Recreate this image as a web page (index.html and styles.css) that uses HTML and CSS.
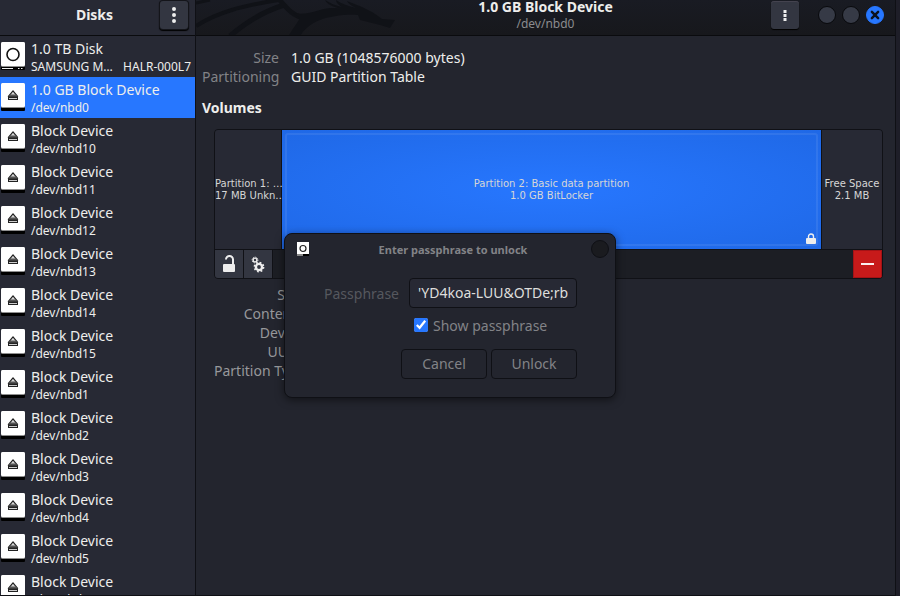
FILE: index.html
```html
<!DOCTYPE html>
<html lang="en">
<head>
<meta charset="utf-8">
<title>Disks</title>
<link rel="stylesheet" href="styles.css">
</head>
<body>
<svg class="defs" aria-hidden="true">
  <symbol id="drive" viewBox="0 0 24 29">
    <rect y="22" width="24" height="6" rx="1" fill="#000"/>
    <rect width="24" height="25" rx="1.5" fill="#8f8f8f"/>
    <rect width="24" height="24" rx="1.5" fill="#fff"/>
  </symbol>
  <symbol id="block" viewBox="0 0 24 29">
    <use href="#drive"/>
    <path d="M12 7.8 16.6 13.400H7.400Z" fill="#d8d8d8" stroke="#222" stroke-width="1.2" stroke-linejoin="round"/>
    <path d="M9 11.500h6l1.500 2H7.500Z" fill="#555"/>
    <rect x="7.500" y="14.500" width="9" height="2" fill="#ccc" stroke="#222"/>
  </symbol>
  <symbol id="disk" viewBox="0 0 24 29">
    <use href="#drive"/>
    <circle cx="12" cy="12.5" r="6" fill="none" stroke="#111" stroke-width="1.600"/>
    <path d="M1 26.500h11M17 26.500h1.500M20 26.500h1.500" stroke="#eee"/>
  </symbol>
</svg>
<div class="window">
  <aside class="sidebar">
    <header class="bar side-bar">
      <h1>Disks</h1>
      <button class="menu large" aria-label="Main menu"><svg viewBox="0 0 28 28"><path d="M14 8v0M14 14v0M14 20v0" stroke="#eee" stroke-width="4" stroke-linecap="round"/></svg></button>
    </header>
    <ul class="devices">
      <li><svg class="icon"><use href="#disk"/></svg><div><b>1.0 TB Disk</b><small><span>SAMSUNG M…</span><span>HALR-000L7</span></small></div></li>
      <li class="selected"><svg class="icon"><use href="#block"/></svg><div><b>1.0 GB Block Device</b><small>/dev/nbd0</small></div></li>
      <li><svg class="icon"><use href="#block"/></svg><div><b>Block Device</b><small>/dev/nbd10</small></div></li>
      <li><svg class="icon"><use href="#block"/></svg><div><b>Block Device</b><small>/dev/nbd11</small></div></li>
      <li><svg class="icon"><use href="#block"/></svg><div><b>Block Device</b><small>/dev/nbd12</small></div></li>
      <li><svg class="icon"><use href="#block"/></svg><div><b>Block Device</b><small>/dev/nbd13</small></div></li>
      <li><svg class="icon"><use href="#block"/></svg><div><b>Block Device</b><small>/dev/nbd14</small></div></li>
      <li><svg class="icon"><use href="#block"/></svg><div><b>Block Device</b><small>/dev/nbd15</small></div></li>
      <li><svg class="icon"><use href="#block"/></svg><div><b>Block Device</b><small>/dev/nbd1</small></div></li>
      <li><svg class="icon"><use href="#block"/></svg><div><b>Block Device</b><small>/dev/nbd2</small></div></li>
      <li><svg class="icon"><use href="#block"/></svg><div><b>Block Device</b><small>/dev/nbd3</small></div></li>
      <li><svg class="icon"><use href="#block"/></svg><div><b>Block Device</b><small>/dev/nbd4</small></div></li>
      <li><svg class="icon"><use href="#block"/></svg><div><b>Block Device</b><small>/dev/nbd5</small></div></li>
      <li><svg class="icon"><use href="#block"/></svg><div><b>Block Device</b><small>/dev/nbd6</small></div></li>
    </ul>
  </aside>
  <main>
    <header class="bar main-bar">
      <svg class="dragon" viewBox="0 0 204 35" aria-hidden="true">
        <g fill="none" stroke="#101217">
          <path d="M0 26C22 12 46 6 82 0" stroke-width="4"/>
          <path d="M34 36C50 22 66 12 88 5" stroke-width="5"/>
          <path d="M0 3 14 0" stroke-width="3"/>
          <path d="M82-2C92 10 98 17 112 19" stroke-width="5"/>
        </g>
        <path fill="#101217" d="M93 35C98 27 102 22 104 18L97 13C106 15 114 13 124 10 134 7 140 8 146 9 136 7 131 4 129 0 134 3 138 5 146 7 142 5 140 2 140 0 146 4 152 6 160 8 155 6 152 3 151 1L166 7 176 12 182 16 186 19 199 20 194 28 184 25 172 22 164 20 162 15C150 14 134 16 124 20 116 23 108 29 105 35Z"/>
      </svg>
      <div class="heading"><h2>1.0 GB Block Device</h2><p>/dev/nbd0</p></div>
      <div class="controls">
        <button class="menu" aria-label="Drive options"><svg viewBox="0 0 28 28"><path d="M12.500 9h3v3h-3zM12.500 13h3v3h-3zM12.500 17h3v3h-3z" fill="#eee"/></svg></button>
        <button class="round" aria-label="Minimize"></button>
        <button class="round" aria-label="Maximize"></button>
        <button class="round close" aria-label="Close"><svg viewBox="0 0 18 18"><path d="M5.5 5.5l7 7M12.500 5.500l-7 7" stroke="#0b1220" stroke-width="2.800" stroke-linecap="round"/></svg></button>
      </div>
    </header>
    <section class="content">
      <dl class="facts">
        <dt>Size</dt><dd>1.0 GB (1048576000 bytes)</dd>
        <dt>Partitioning</dt><dd>GUID Partition Table</dd>
      </dl>
      <h3>Volumes</h3>
      <div class="volumes">
        <div class="map">
          <div class="part first"><span>Partition 1: …</span><span>17 MB Unkn…</span></div>
          <div class="part active"><span>Partition 2: Basic data partition</span><span>1.0 GB BitLocker</span>
            <svg class="lock" viewBox="0 0 10 12"><path d="M2.500 6V3.500a2.500 2.500 0 0 1 5 0V6" fill="none" stroke="#eee" stroke-width="1.400"/><rect y="5" width="10" height="6" rx="1" fill="#eee"/></svg>
          </div>
          <div class="part"><span>Free Space</span><span>2.1 MB</span></div>
        </div>
        <div class="tools">
          <button aria-label="Unlock partition"><svg viewBox="0 0 28 28"><path d="M11 9.500a3.500 3.500 0 0 1 7 0V15" fill="none" stroke="#eee" stroke-width="2"/><rect x="8" y="14" width="12" height="8" rx="1" fill="#eee"/></svg></button>
          <button aria-label="Partition options"><svg viewBox="0 0 28 28"><g fill="none" stroke="#eee"><circle cx="15" cy="17" r="3.100" stroke-width="2.400"/><circle cx="15" cy="17" r="4.600" stroke-width="1.600" stroke-dasharray="1.800 1.813"/><circle cx="11" cy="10" r="1.900" stroke-width="1.400"/><circle cx="11" cy="10" r="2.900" stroke-width="1" stroke-dasharray="1.200 1.078"/></g></svg></button>
          <button class="remove" aria-label="Delete partition"><svg viewBox="0 0 28 28"><path d="M7 14h14" stroke="#fff" stroke-width="2"/></svg></button>
        </div>
      </div>
      <dl class="facts lower">
        <dt>Size</dt><dd></dd>
        <dt>Contents</dt><dd></dd>
        <dt>Device</dt><dd></dd>
        <dt>UUID</dt><dd></dd>
        <dt>Partition Type</dt><dd></dd>
      </dl>
    </section>
  </main>
  <form class="dialog" role="dialog" aria-labelledby="dialog-title">
    <header>
      <svg class="app" viewBox="0 0 12 14"><rect width="12" height="12" fill="#fff"/><rect y="12" width="6" height="2" fill="#888"/><rect x="6" y="12" width="6" height="2" fill="#000"/><circle cx="6" cy="6.500" r="3" fill="none" stroke="#222" stroke-width="1.200"/></svg>
      <h2 id="dialog-title">Enter passphrase to unlock</h2>
      <button type="button" class="dismiss" aria-label="Close dialog"></button>
    </header>
    <div class="fields">
      <label for="pass">Passphrase</label>
      <input type="text" id="pass" value="'YD4koa-LUU&amp;OTDe;rb">
      <label class="show"><input type="checkbox" checked>Show passphrase</label>
    </div>
    <div class="actions"><button type="button">Cancel</button><button type="submit">Unlock</button></div>
  </form>
</div>
</body>
</html>
```
FILE: styles.css
```css
* { box-sizing: border-box; margin: 0; padding: 0; }
body {
  font: 14px/19px "Noto Sans", "Liberation Sans", sans-serif;
  color: #eeeeec;
  background: #1e1e28;
  overflow: hidden;
}
button, input { font: inherit; color: inherit; }
.defs { position: absolute; width: 0; height: 0; }
.window {
  position: relative;
  display: grid;
  grid-template-columns: 196px 1fr;
  height: 100vh;
  margin-right: 4px;
  border-right: 1px solid #0f1015;
  border-bottom: 1px solid #0f1015;
  background: #23252e;
}
.sidebar { background: #272934; border-right: 1px solid #0f1015; overflow: hidden; }
.bar { height: 36px; border-bottom: 1px solid #0a0b0e; }
.side-bar { display: grid; grid-template-columns: 1fr 28px; align-items: start; padding: 1px 7px 0 29px; }
h1 { font-size: 14px; line-height: 28px; text-align: center; }
.menu {
  display: block;
  width: 28px;
  height: 28px;
  border: 0;
  border-radius: 3px;
  background: #333641;
  box-shadow: inset 0 1px #44434f, 0 1px 1px #000;
}
.menu.large { box-shadow: 0 0 0 1px #14151a, 0 1px 1px 1px #000; }
.menu svg, .tools svg, .close svg { display: block; width: 100%; height: 100%; }
.devices { list-style: none; }
.devices li { display: flex; gap: 6px; height: 41px; padding: 3px 4px 2px 1px; }
.devices .selected { background: #2777ff; }
.icon { flex: none; width: 24px; height: 29px; margin-top: 3px; }
.devices div { flex: 1; min-width: 0; }
.devices b { display: block; font-weight: 400; }
.devices small { display: flex; justify-content: space-between; font-size: 12px; line-height: 17px; white-space: nowrap; }
main { min-width: 0; }
.main-bar {
  position: relative;
  display: grid;
  grid-template-columns: 1fr auto 1fr;
  background: linear-gradient(#191b23, #17181c);
}
.dragon { position: absolute; left: 0; top: 0; width: 204px; height: 35px; }
.heading { grid-column: 2; text-align: center; }
.heading h2 { font-size: 14px; line-height: 14px; }
.heading p { font-size: 12px; line-height: 20px; color: #8b8c8f; }
.controls { display: flex; justify-content: flex-end; gap: 6px; padding: 1px 11px 0 0; }
.controls .menu { margin-right: 13px; }
.round { width: 18px; height: 18px; margin-top: 5px; border: 1px solid #08090c; border-radius: 50%; background: #363a46; }
.round.close { border-color: #2777ff; background: #2777ff; }
.content { padding: 12px 12px 0 6px; }
.facts { display: grid; grid-template-columns: 77px 1fr; column-gap: 12px; }
.facts dt { text-align: right; color: #828387; white-space: nowrap; }
h3 { margin: 12px 0; font-size: 14px; line-height: 19px; }
.volumes { margin-left: 12px; border: 1px solid #101116; border-radius: 4px; overflow: hidden; background: #1c1e24; }
.map {
  display: grid;
  grid-template-columns: 66px 1fr 60px;
  gap: 1px;
  height: 120px;
  border-bottom: 1px solid #101116;
  background: #101116;
  font: 10px/12px "DejaVu Sans", sans-serif;
}
.part {
  position: relative;
  display: flex;
  flex-direction: column;
  justify-content: center;
  align-items: center;
  background: #272934;
  white-space: nowrap;
}
.part.first { align-items: flex-start; }
.part.active {
  background: radial-gradient(ellipse at center, #2777ff, #1f68e6);
}
.part.active::before { content: ""; position: absolute; inset: 3px; border: 2px solid rgba(255, 255, 255, .08); border-radius: 3px; }
.part span { color: #d6d6d6; }
.lock { position: absolute; right: 5px; bottom: 4px; width: 10px; height: 12px; }
.tools { display: flex; height: 28px; }
.tools button { width: 29px; border: 0; border-right: 1px solid #101116; background: #333641; }
.tools .remove { margin-left: auto; border: 1px solid #a51216; background: #c71a1a; }
.lower { grid-template-columns: 89px 1fr; margin-top: 6px; padding-left: 12px; }
.lower dt { color: #97989b; }
.lower dd { min-height: 19px; }
.dialog {
  position: absolute;
  top: 233px;
  left: 284px;
  width: 332px;
  padding-bottom: 18px;
  border: 1px solid #0f1015;
  border-radius: 8px;
  background: #23252e;
  box-shadow: 0 2px 8px rgba(0, 0, 0, .5);
  color: #828387;
}
.dialog header { display: grid; grid-template-columns: 18px 1fr 18px; align-items: center; height: 30px; padding: 0 6px 0 12px; }
.app { width: 12px; height: 14px; }
.dialog h2 { font-size: 11px; text-align: center; }
.dismiss { width: 18px; height: 18px; border: 1px solid #0f1015; border-radius: 50%; background: #1a1b1f; }
.fields { display: grid; grid-template-columns: 76px 168px; gap: 3px 10px; align-items: center; justify-content: end; padding: 14px 38px 0; }
.fields > label:first-child { color: #56585e; text-align: right; }
.fields input[type="text"] { width: 100%; height: 30px; padding: 0 8px 1px; border: 1px solid #0f1015; border-radius: 4px; background: #272934; color: #dededc; }
.show { grid-column: 2; display: flex; align-items: center; gap: 5px; height: 28px; padding-left: 5px; }
.show input { width: 14px; height: 14px; accent-color: #2777ff; }
.actions { display: flex; justify-content: flex-end; gap: 4px; padding: 10px 38px 0; }
.actions button { width: 86px; height: 30px; padding-bottom: 2px; border: 1px solid #0f1015; border-radius: 4px; background: #23252e; }
```
